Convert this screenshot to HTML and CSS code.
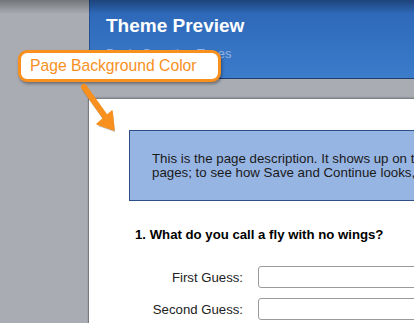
FILE: index.html
```html
<!DOCTYPE html>
<html lang="en">
<head>
    <meta charset="UTF-8">
    <meta name="viewport" content="width=device-width, initial-scale=1.0">
    <title>Theme Preview</title>
    <link rel="stylesheet" href="styles.css">
</head>
<body>
    <div class="screen">
        <div class="survey">
            <header class="survey-header">
                <h1>Theme Preview</h1>
                <p class="subtitle">Basic Question Types</p>
            </header>

            <div class="survey-page">
                <div class="description">
                    <p>This is the page description. It shows up on the first and last</p>
                    <p>pages; to see how Save and Continue looks, go to the next page.</p>
                </div>

                <div class="question">
                    <h2>1. What do you call a fly with no wings?</h2>
                    <div class="field">
                        <label for="guess1">First Guess:</label>
                        <input type="text" id="guess1">
                    </div>
                    <div class="field">
                        <label for="guess2">Second Guess:</label>
                        <input type="text" id="guess2">
                    </div>
                </div>
            </div>
        </div>

        <!-- annotation overlay -->
        <div class="top-shadow"></div>
        <div class="callout">Page Background Color</div>
        <svg class="arrow" width="414" height="323" viewBox="0 0 414 323">
            <g opacity="0.25" transform="translate(1,2)">
                <line x1="84" y1="87" x2="106" y2="118" stroke="#000" stroke-width="6" stroke-linecap="round"/>
                <polygon points="97,124 112,111 114,130" fill="#000"/>
            </g>
            <line x1="84" y1="87" x2="106" y2="118" stroke="#f7901e" stroke-width="6" stroke-linecap="round"/>
            <polygon points="97,124 112,111 114,130" fill="#f7901e" stroke="#f7901e" stroke-width="1.5" stroke-linejoin="round"/>
        </svg>
    </div>
</body>
</html>
```

FILE: styles.css
```css
/* Basic reset */
* {
    box-sizing: border-box;
    margin: 0;
    padding: 0;
}

body {
    background-color: #a9acb3;
    font-family: "Liberation Sans", Arial, sans-serif;
    color: #111;
    overflow: hidden;
}

.screen {
    position: relative;
    width: 414px;
    height: 323px;
    overflow: hidden;
}

/* Survey column */
.survey {
    width: 520px;
    margin-left: 89px;
}

.survey-header {
    height: 79px;
    padding: 16px 0 0 16px;
    background: linear-gradient(#2c65b6, #3b7ccb);
    border-left: 1px solid #23508f;
    border-bottom: 1px solid #1f3d6a;
}

.survey-header h1 {
    font-size: 19px;
    font-weight: bold;
    line-height: 20px;
    color: #ffffff;
}

.subtitle {
    margin-top: 10px;
    font-size: 13px;
    color: #97b4e2;
}

/* Page body */
.survey-page {
    margin-top: 20px;
    height: 240px;
    padding: 31px 0 0 40px;
    background-color: #ffffff;
    box-shadow: 0 -1px 2px rgba(0, 0, 0, 0.35), -1px 0 1px rgba(0, 0, 0, 0.2);
}

.description {
    height: 71px;
    padding: 21px 0 0 22px;
    background-color: #97b5e3;
    border: 1px solid #2b4f86;
    font-size: 13.3px;
    line-height: 14px;
    color: #1a1a1a;
    white-space: nowrap;
}

.question {
    padding: 26px 0 0 6px;
}

.question h2 {
    font-size: 13.2px;
    font-weight: bold;
    line-height: 15px;
    color: #000;
}

.field {
    display: flex;
    align-items: center;
    gap: 15px;
    margin-top: 10px;
}

.question h2 + .field {
    margin-top: 24px;
}

.field label {
    width: 108px;
    text-align: right;
    font-size: 13.2px;
    color: #222;
}

.field input {
    width: 220px;
    height: 22px;
    border: 1px solid #9a9a9a;
    border-radius: 3px;
    background-color: #fff;
}

/* Annotation */
.top-shadow {
    position: absolute;
    top: 0;
    left: 0;
    width: 414px;
    height: 14px;
    background: linear-gradient(rgba(0, 0, 0, 0.32), rgba(0, 0, 0, 0));
}

.callout {
    position: absolute;
    top: 50px;
    left: 18px;
    width: 203px;
    height: 32px;
    padding-left: 9px;
    border: 3px solid #f7901e;
    border-radius: 9px;
    background-color: #ffffff;
    box-shadow: 1px 2px 3px rgba(0, 0, 0, 0.35);
    font-size: 15.7px;
    line-height: 26px;
    color: #f7901e;
    white-space: nowrap;
}

.arrow {
    position: absolute;
    top: 0;
    left: 0;
}
```
